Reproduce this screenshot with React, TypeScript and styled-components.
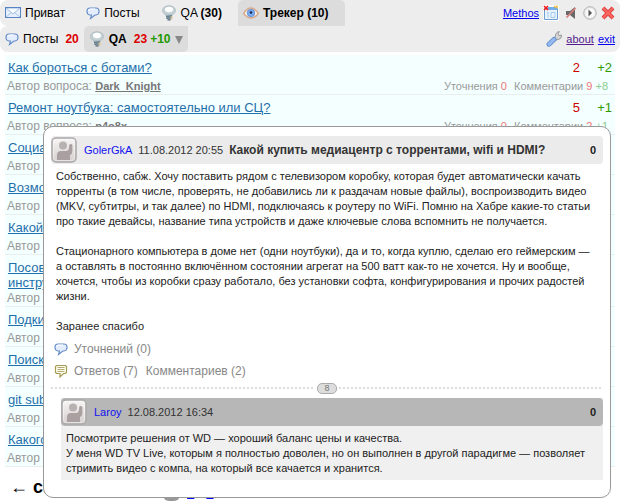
import React from "react";
import styled, { createGlobalStyle } from "styled-components";

const GlobalStyle = createGlobalStyle`
  * { box-sizing: border-box; }
  body {
    margin: 0;
    background: #fff;
    color: #000;
    font: 12px/16px "Liberation Sans", Arial, sans-serif;
    overflow: hidden;
  }
  svg { display: block; flex: none; }
`;

const Page = styled.main`
  position: relative;
`;

const Bar = styled.nav<{ $first?: boolean }>`
  display: flex;
  align-items: stretch;
  height: 26px;
  background: #ededed;
  border-radius: ${(p) => (p.$first ? "8px 8px 0 8px" : "8px 0 8px 8px")};
`;

const Tab = styled.a<{ $active?: boolean; $bold?: boolean; $low?: boolean }>`
  display: flex;
  align-items: center;
  gap: 4px;
  padding: 0 16px 0 5px;
  color: #000;
  text-decoration: none;
  white-space: nowrap;
  font-weight: ${(p) => (p.$bold ? "bold" : "normal")};
  background: ${(p) => (p.$active ? "#dcdcdc" : "transparent")};
  border-radius: ${(p) => (p.$low ? "5px 0 5px 5px" : "5px 5px 0 0")};
`;

const SubTab = styled(Tab)`
  padding-right: 5px;
`;

const Tally = styled.b<{ $color: string; $near?: boolean }>`
  color: ${(p) => p.$color};
  margin-left: ${(p) => (p.$near ? "-1px" : "3px")};
`;

const Tools = styled.div`
  display: flex;
  align-items: center;
  gap: 4px;
  margin-left: auto;
  padding-right: 5px;
  font-size: 11px;
`;

const ToolButton = styled.button`
  padding: 0;
  border: 0;
  background: none;
`;

const ToolLink = styled.a<{ $visited?: boolean }>`
  color: ${(p) => (p.$visited ? "#551a8b" : "#0000ee")};
`;

const List = styled.section`
  margin: 3px 5px 0;
`;

const Question = styled.article`
  display: grid;
  grid-template-columns: 1fr auto;
  padding: 5px 2px 0;
  background: #f4ffff;
  border-bottom: 1px solid #eaeeee;
`;

const Title = styled.h2`
  min-height: 18px;
  margin: 0;
  padding-left: 1px;
  font-size: 13px;
  font-weight: normal;
  line-height: 15px;
`;

const TitleLink = styled.a`
  color: #1f6fab;
`;

const Counts = styled.div`
  display: flex;
  justify-content: flex-end;
  padding-right: 1px;
  font-size: 13px;
  line-height: 15px;
  color: #c00;
`;

const Delta = styled.span`
  width: 32px;
  text-align: right;
  color: #390;
`;

const Author = styled.div`
  color: #999;
`;

const AuthorLink = styled.a`
  color: #777;
  font-size: 11px;
  font-weight: bold;
`;

const Details = styled.div`
  display: flex;
  gap: 7px;
  padding-right: 5px;
  color: #999;
  font-size: 11px;
`;

const Red = styled.span`
  color: #e77;
`;

const Green = styled.span`
  margin-left: 3px;
  color: #8c8;
`;

const Pager = styled.footer`
  display: flex;
  align-items: baseline;
  gap: 5px;
  padding: 8px 10px 0;
  font-size: 18px;
  line-height: 24px;
  font-weight: bold;
  white-space: nowrap;
`;

const PagerLink = styled.a`
  margin-right: 10px;
  color: #00f;
  text-decoration: none;
`;

const PageLink = styled.a`
  margin: 0 5px 0 2px;
  color: #00f;
  font-size: 13px;
  font-weight: normal;
  line-height: 20px;
  text-underline-offset: 5px;
`;

const Current = styled.span`
  padding: 5px;
  border-radius: 6px;
  background: #999;
  color: #fff;
  font-size: 13px;
  line-height: 15px;
`;

const Popup = styled.section`
  position: absolute;
  top: 126px;
  left: 43px;
  right: 9px;
  padding: 9px 7px 17px;
  border: 1px solid #999;
  border-radius: 10px;
  background: #fff;
  color: #222;
  font-size: 11px;
  line-height: 15px;
`;

const PostHeader = styled.header<{ $dark?: boolean }>`
  display: flex;
  align-items: center;
  height: 28px;
  padding-right: 7px;
  border-radius: 4px;
  color: #333;
  background: ${(p) => (p.$dark ? "#b7b7b7" : "#ebebeb")};
`;

const User = styled.a`
  margin: 0 6px 0 7px;
  color: #11e;
  text-decoration: none;
`;

const Heading = styled.h1`
  margin: 0 0 0 6px;
  font-size: 12px;
  white-space: nowrap;
`;

const Score = styled.b`
  margin-left: auto;
  color: #222;
`;

const Text = styled.p`
  margin: 5px 0 0;
  padding-left: 5px;
  white-space: nowrap;
`;

const Gap = styled(Text)`
  margin-top: 15px;
`;

const Meta = styled.div`
  display: flex;
  align-items: center;
  height: 22px;
  padding-left: 3px;
`;

const MetaGroup = styled.div`
  padding-top: 4px;
`;

const MetaLink = styled.a`
  margin: 0 2px 0 6px;
  color: #888;
  font-size: 12px;
  text-decoration: none;
`;

const Divider = styled.div`
  display: flex;
  align-items: center;
  gap: 2px;
  height: 12px;
  &::before, &::after {
    content: "";
    flex: 1;
    height: 2px;
    background: repeating-linear-gradient(90deg, #ddd 0 2px, transparent 2px 4px);
  }
`;

const Badge = styled.span`
  width: 20px;
  height: 11px;
  border: 1px solid #aaa;
  border-radius: 5px;
  background: #ddd;
  color: #777;
  font-size: 9px;
  line-height: 9px;
  text-align: center;
`;

const Reply = styled.article`
  margin: 4px 0 0 10px;
  background: #f0f0f0;
`;

const ReplyText = styled(Text)`
  margin: 0;
  padding: 5px 5px 4px;
`;

function Avatar() {
  return (
    <svg width="26" height="28" viewBox="0 0 26 28" role="img" aria-label="avatar">
      <defs>
        <linearGradient id="plate" x2="0" y2="1">
          <stop stopColor="#f7f5f5" />
          <stop offset="1" stopColor="#d6cfcf" />
        </linearGradient>
      </defs>
      <rect x="1" y="2" width="24" height="24" rx="4" fill="url(#plate)" stroke="#aba8a8" strokeWidth="1.5" />
      <circle cx="12" cy="9.500" r="4" fill="#b8b1b1" />
      <path d="M6 24v-5q0-4 4-4h5q2.500 0 3-3l.2-3q1.600-2 3.200 0v6q0 3-2.400 4v5z" fill="#aaa0a0" />
      <rect x="2.500" y="3.500" width="21" height="21" rx="3" fill="none" stroke="#fff" opacity=".4" />
    </svg>
  );
}

function Envelope() {
  return (
    <svg width="16" height="16" viewBox="0 0 16 16">
      <rect x=".5" y="2.500" width="15" height="10" fill="#e6f0fc" />
      <path d="M1 12l5-4M15 12l-5-4" fill="none" stroke="#a9c3e6" />
      <path d="M1 3h14L8 9z" fill="#f7fbff" stroke="#9dbbe2" />
      <rect x=".5" y="2.500" width="15" height="10" fill="none" stroke="#5a83c4" />
    </svg>
  );
}

function Bubble() {
  return (
    <svg width="14" height="14" viewBox="0 0 14 14">
      <path
        d="M4 2h6q3 0 3 3v.5q0 3-3 3.500H9l-4.500 3.500L5.500 9H4Q1 8.500 1 5.500V5q0-3 3-3z"
        fill="#e3edfd"
        stroke="#648bc8"
        strokeWidth="1.1"
      />
      <path d="M2.500 5q.5-2 2-2H9" fill="none" stroke="#fff" />
    </svg>
  );
}

function Notes() {
  return (
    <svg width="14" height="14" viewBox="0 0 14 14">
      <path d="M2.500 1.500h9l1 1v6l-1 1H9.500L6 13V9.500H2.500l-1-1v-6z" fill="#fffff0" stroke="#a59b55" strokeWidth="1.200" />
      <path d="M3.500 3.500h7M3.500 5.500h7M3.500 7.500h7" stroke="#b2a975" />
    </svg>
  );
}

function Bulb() {
  return (
    <svg width="16" height="16" viewBox="0 0 16 16">
      <ellipse cx="8" cy="5.500" rx="6.500" ry="4.800" fill="#c3d0d4" stroke="#a9b8bd" strokeWidth=".8" />
      <path d="M4.500 9h7v2h-7z" fill="#b4c2c9" />
      <ellipse cx="8" cy="4.500" rx="4" ry="2.800" fill="#fff" />
      <path d="M5 10.500h6v3.500q-3 2-5 0l-1-1z" fill="#8ea2b0" />
      <path d="M5 11.500l6-.8M5.500 13.500l5-1" stroke="#4f6879" strokeWidth=".8" />
      <path d="M9.500 11.500h2v2.500h-2z" fill="#d9c28e" />
      <path d="M6.500 15h3" stroke="#52616a" />
    </svg>
  );
}

function Eye() {
  return (
    <svg width="16" height="16" viewBox="0 0 16 16">
      <path d="M.7 8.500Q4 3 8 3t7.300 5.500Q12 13 8 13T.7 8.500z" fill="#fffaf2" stroke="#d9aa8b" strokeWidth="1.500" />
      <circle cx="8" cy="8" r="3.800" fill="#7da9ee" stroke="#5d88cc" strokeWidth=".8" />
      <circle cx="8" cy="7.500" r="1.300" fill="#102b57" />
    </svg>
  );
}

function Calendar() {
  return (
    <svg width="16" height="16" viewBox="0 0 16 16">
      <path d="M0 0h16v16H0z" fill="#fff" />
      <path d="M1.500 3.500h13v11h-13z" fill="#e8f3fd" stroke="#6d9fd4" />
      <path d="M5 2h9v3H5z" fill="#73aee6" />
      <path d="M4 8l1-1v6M8 7.500h4v5H8z" fill="none" stroke="#a5c9ec" />
      <path d="M11 1l1.500 1.500L14 1l.5 2.500" stroke="#f0bd43" fill="none" strokeWidth="1.200" />
      <path d="M1 1l4 4m0-4L1 5" stroke="#e11" strokeWidth="1.500" />
    </svg>
  );
}

function Speaker() {
  return (
    <svg width="16" height="16" viewBox="0 0 16 16">
      <path d="M3 6h4l5-4v12l-5-4H3z" fill="#686868" />
      <path d="M3.500 12.500L12.500 3" stroke="#d77d7a" strokeWidth="1.800" />
    </svg>
  );
}

function Play() {
  return (
    <svg width="14" height="16" viewBox="0 0 14 16">
      <circle cx="7" cy="8" r="6.300" fill="#e6e6e6" stroke="#b5b5b5" />
      <circle cx="7" cy="8" r="4.700" fill="#fafafa" />
      <path d="M5.500 4.500L9 8l-3.500 3.500z" fill="#555" />
    </svg>
  );
}

function Cross() {
  return (
    <svg width="14" height="16" viewBox="0 0 14 16">
      <path d="M2 3l10 10m0-10L2 13" stroke="#dc3f3f" strokeWidth="4" />
      <path d="M2 3l10 10m0-10L2 13" stroke="#f9655f" strokeWidth="2.400" />
    </svg>
  );
}

function Wrench() {
  return (
    <svg width="16" height="16" viewBox="0 0 16 16">
      <path
        d="M7.500 7l2-1.500q-.5-4 3.800-5L12 3l1 1.500 2.500-.5q.3 4.500-4.500 4.500L9 10z"
        fill="#d5d5d5"
        stroke="#888"
        strokeWidth=".8"
      />
      <path d="M3 13.200l5-4.700" stroke="#5b88ca" strokeWidth="5" strokeLinecap="round" />
      <path d="M3 13.200l5-4.700" stroke="#94baf0" strokeWidth="3.400" strokeLinecap="round" />
    </svg>
  );
}

function Triangle() {
  return (
    <svg width="8" height="9" viewBox="0 0 8 9">
      <path d="M0 1h8L4 9z" fill="#888" />
    </svg>
  );
}

type Row = {
  title: React.ReactNode;
  author?: string;
  answers?: number;
  fresh?: string;
  notes?: number;
  more?: string;
};

const rows: Row[] = [
  { title: "Как бороться с ботами?", author: "Dark_Knight", answers: 2, fresh: "+2", notes: 9, more: "+8" },
  { title: "Ремонт ноутбука: самостоятельно или СЦ?", author: "p4o8x", answers: 5, fresh: "+1", notes: 2, more: "+1" },
  { title: "Социальные сети" },
  { title: "Возможности" },
  { title: "Какой купить" },
  { title: <>Посоветуйте<br />инструмент</> },
  { title: "Подкиньте" },
  { title: "Поиск" },
  { title: "git submodule" },
  { title: "Какого" },
];

function QuestionRow({ row }: { row: Row }) {
  return (
    <Question>
      <Title><TitleLink href="#question">{row.title}</TitleLink></Title>
      <Counts>
        {row.answers}
        <Delta>{row.fresh}</Delta>
      </Counts>
      <Author>
        Автор вопроса: {row.author && <AuthorLink href="#author">{row.author}</AuthorLink>}
      </Author>
      <Details>
        {row.more && (
          <>
            <span>Уточнения <Red>0</Red></span>
            <span>Комментарии <Red>{row.notes}</Red><Green>{row.more}</Green></span>
          </>
        )}
      </Details>
    </Question>
  );
}

export default function App() {
  return (
    <Page>
      <GlobalStyle />
      <Bar $first>
        <Tab href="#private"><Envelope />Приват</Tab>
        <Tab href="#posts"><Bubble />Посты</Tab>
        <Tab href="#qa"><Bulb /><span>QA <b>(30)</b></span></Tab>
        <Tab href="#tracker" $active $bold><Eye />Трекер (10)</Tab>
        <Tools>
          <ToolLink href="#methos">Methos</ToolLink>
          <ToolButton aria-label="calendar"><Calendar /></ToolButton>
          <ToolButton aria-label="mute"><Speaker /></ToolButton>
          <ToolButton aria-label="play"><Play /></ToolButton>
          <ToolButton aria-label="close"><Cross /></ToolButton>
        </Tools>
      </Bar>
      <Bar>
        <SubTab href="#sub-posts">
          <Bubble />Посты<Tally $color="#d00">20</Tally>
        </SubTab>
        <SubTab href="#sub-qa" $active $bold $low>
          <Bulb />QA<Tally $color="#d00">23</Tally><Tally $color="#290" $near>+10</Tally><Triangle />
        </SubTab>
        <Tools>
          <ToolButton aria-label="settings"><Wrench /></ToolButton>
          <ToolLink href="#about" $visited>about</ToolLink>
          <ToolLink href="#exit">exit</ToolLink>
        </Tools>
      </Bar>
      <List>
        {rows.map((row, i) => <QuestionRow key={i} row={row} />)}
      </List>
      <Pager>
        <span>← сюда</span>
        <PagerLink href="#next">туда →</PagerLink>
        <Current>1</Current>
        <PageLink href="#2">2</PageLink>
        <PageLink href="#3">3</PageLink>
      </Pager>
      <Popup>
        <PostHeader>
          <Avatar />
          <User href="#golergka">GolerGkA</User>
          <time>11.08.2012 20:55</time>
          <Heading>Какой купить медиацентр с торрентами, wifi и HDMI?</Heading>
          <Score>0</Score>
        </PostHeader>
        <Text>
          Собственно, сабж. Хочу поставить рядом с телевизором коробку, которая будет автоматически качать<br />
          торренты (в том числе, проверять, не добавились ли к раздачам новые файлы), воспроизводить видео<br />
          (MKV, субтитры, и так далее) по HDMI, подключаясь к роутеру по WiFi. Помню на Хабре какие-то статьи<br />
          про такие девайсы, название типа устройств и даже ключевые слова вспомнить не получается.
        </Text>
        <Gap>
          Стационарного компьютера в доме нет (одни ноутбуки), да и то, когда куплю, сделаю его геймерским —<br />
          а оставлять в постоянно включённом состоянии агрегат на 500 ватт как-то не хочется. Ну и вообще,<br />
          хочется, чтобы из коробки сразу работало, без установки софта, конфигурирования и прочих радостей<br />
          жизни.
        </Gap>
        <Gap>Заранее спасибо</Gap>
        <MetaGroup>
          <Meta><Bubble /><MetaLink href="#notes">Уточнений (0)</MetaLink></Meta>
          <Meta>
            <Notes />
            <MetaLink href="#answers">Ответов (7)</MetaLink>
            <MetaLink href="#comments">Комментариев (2)</MetaLink>
          </Meta>
        </MetaGroup>
        <Divider><Badge>8</Badge></Divider>
        <Reply>
          <PostHeader $dark>
            <Avatar />
            <User href="#laroy">Laroy</User>
            <time>12.08.2012 16:34</time>
            <Score>0</Score>
          </PostHeader>
          <ReplyText>
            Посмотрите решения от WD — хороший баланс цены и качества.<br />
            У меня WD TV Live, которым я полностью доволен, но он выполнен в другой парадигме — позволяет<br />
            стримить видео с компа, на который все качается и хранится.
          </ReplyText>
        </Reply>
      </Popup>
    </Page>
  );
}
